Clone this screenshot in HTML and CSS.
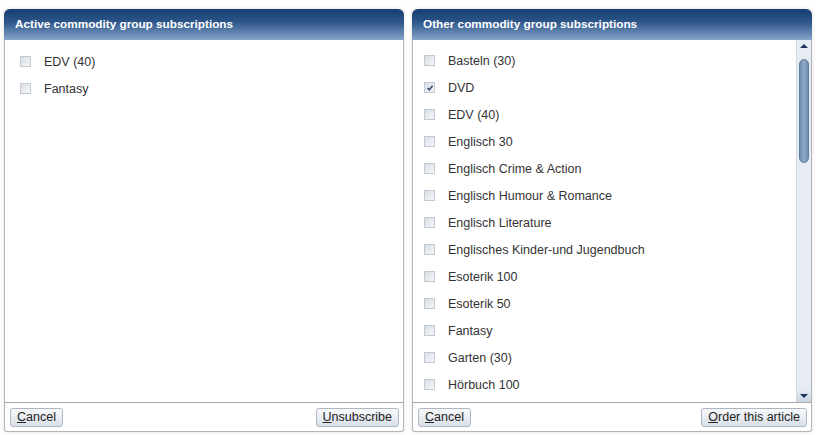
FILE: index.html
```html
<!DOCTYPE html>
<html>
<head>
<meta charset="utf-8">
<link rel="stylesheet" href="styles.css">
</head>
<body>
<div class="page">
  <section class="panel">
    <header class="panel-head">Active commodity group subscriptions</header>
    <div class="panel-body">
      <ul class="list list-left">
        <li><span class="cb"></span>EDV (40)</li>
        <li><span class="cb"></span>Fantasy</li>
      </ul>
    </div>
    <footer class="panel-foot">
      <button class="btn"><u>C</u>ancel</button>
      <button class="btn"><u>U</u>nsubscribe</button>
    </footer>
  </section>
  <section class="panel">
    <header class="panel-head">Other commodity group subscriptions</header>
    <div class="panel-body">
      <ul class="list list-right">
        <li><span class="cb"></span>Basteln (30)</li>
        <li><span class="cb checked"><svg viewBox="0 0 10 10" width="10" height="10"><path d="M2.5 5 L4.3 6.8 L7.6 2.8" fill="none" stroke="#2f4a70" stroke-width="1.5"/></svg></span>DVD</li>
        <li><span class="cb"></span>EDV (40)</li>
        <li><span class="cb"></span>Englisch 30</li>
        <li><span class="cb"></span>Englisch Crime &amp; Action</li>
        <li><span class="cb"></span>Englisch Humour &amp; Romance</li>
        <li><span class="cb"></span>Englisch Literature</li>
        <li><span class="cb"></span>Englisches Kinder-und Jugendbuch</li>
        <li><span class="cb"></span>Esoterik 100</li>
        <li><span class="cb"></span>Esoterik 50</li>
        <li><span class="cb"></span>Fantasy</li>
        <li><span class="cb"></span>Garten (30)</li>
        <li><span class="cb"></span>Hörbuch 100</li>
      </ul>
      <div class="scrollbar">
        <div class="arrow up"></div>
        <div class="track"><div class="thumb"></div></div>
        <div class="arrow down"></div>
      </div>
    </div>
    <footer class="panel-foot">
      <button class="btn"><u>C</u>ancel</button>
      <button class="btn"><u>O</u>rder this article</button>
    </footer>
  </section>
</div>
</body>
</html>
```
FILE: styles.css
```css
html, body {
  margin: 0;
  padding: 0;
  background: #ffffff;
}
body {
  font-family: "Liberation Sans", Arial, sans-serif;
  font-size: 12px;
  color: #333;
}
.page {
  display: flex;
  gap: 8px;
  padding: 9px 6px 3px 4px;
  height: 423px;
}
.panel {
  width: 400px;
  height: 423px;
  display: flex;
  flex-direction: column;
  box-sizing: border-box;
  border: 1px solid #b4b4b4;
  border-top: none;
  border-radius: 6px 6px 3px 3px;
  box-shadow: 0 0 4px rgba(0,0,0,0.12);
  background: #fff;
}
.panel-head {
  height: 31px;
  margin: 0 -1px;
  box-sizing: border-box;
  padding: 8px 0 0 11px;
  border-radius: 6px 6px 0 0;
  background: linear-gradient(to bottom, #173f70 0%, #2b5488 40%, #6f90b9 85%, #86a4c8 100%);
  color: #fff;
  font-weight: bold;
  font-size: 11.75px;
}
.panel-body {
  flex: 1;
  position: relative;
  display: flex;
  border-bottom: 1px solid #a8a8a8;
  overflow: hidden;
}
.list {
  list-style: none;
  margin: 0;
  padding: 8px 0 0 0;
  flex: 1;
}
.list-right {
  padding-top: 7px;
}
.list li {
  height: 27px;
  display: flex;
  align-items: center;
  color: #333;
  font-size: 12.5px;
}
.cb {
  width: 9px;
  height: 9px;
  border: 1px solid #c3c9d0;
  background: linear-gradient(135deg, #d9dfe6, #f4f6f8);
  margin: 0 13px 0 15px;
  display: inline-flex;
  align-items: center;
  justify-content: center;
  overflow: hidden;
}
.list-right .cb {
  margin-left: 11px;
}
.cb svg { display: block; flex: none; }
.scrollbar {
  width: 14px;
  display: flex;
  flex-direction: column;
  background: #e7ecf2;
  border-left: 1px solid #d3dae2;
}
.arrow {
  height: 14px;
  position: relative;
}
.arrow::after {
  content: "";
  position: absolute;
  left: 3px;
  border-left: 4px solid transparent;
  border-right: 4px solid transparent;
}
.arrow.up::after {
  top: 4px;
  border-bottom: 4px solid #1c3558;
}
.arrow.down::after {
  top: 6px;
  border-top: 4px solid #1c3558;
}
.arrow.down {
  background: linear-gradient(to bottom, #e7ecf2, #c9d6e4);
}
.track {
  flex: 1;
  padding: 5px 2px 0 2px;
}
.thumb {
  height: 104px;
  border-radius: 5px;
  background: linear-gradient(to right, #6d8cae, #8fa9c6 50%, #6e8daf);
  border: 1px solid #5f7fa3;
  box-sizing: border-box;
}
.panel-foot {
  height: 28px;
  display: flex;
  justify-content: space-between;
  align-items: flex-start;
  padding: 5px 4px 0 5px;
  box-sizing: border-box;
}
.btn {
  height: 19px;
  padding: 0 6px;
  font-family: "Liberation Sans", Arial, sans-serif;
  font-size: 12.5px;
  color: #222;
  border: 1px solid #aeb6c0;
  border-radius: 3px;
  background: linear-gradient(to bottom, #f8f9fb 0%, #e9edf2 50%, #d8dfe8 100%);
  line-height: 17px;
  cursor: pointer;
}
.btn u { text-decoration: underline; }
```
